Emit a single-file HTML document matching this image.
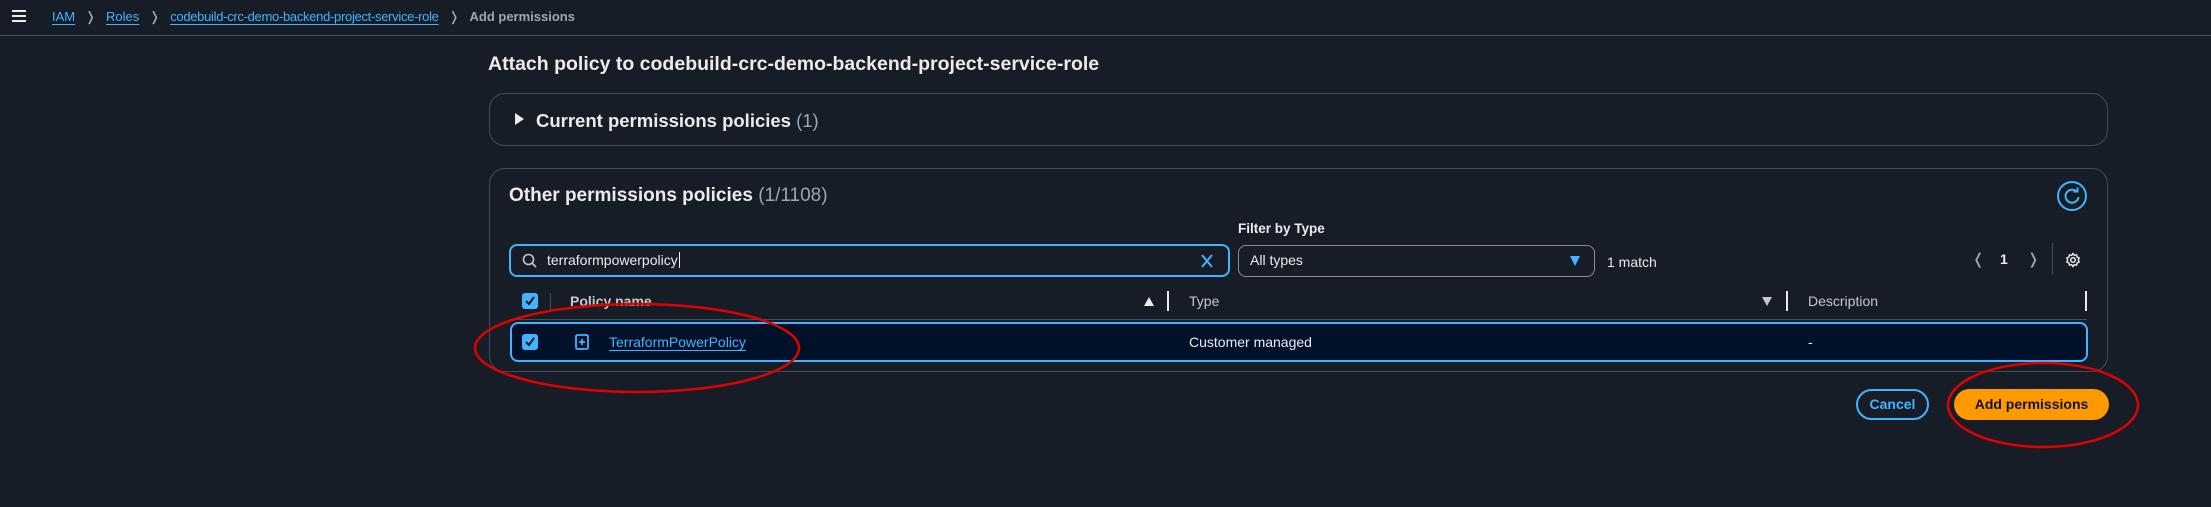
<!DOCTYPE html>
<html><head><meta charset="utf-8"><style>
*{box-sizing:border-box;margin:0;padding:0}
body{width:2211px;height:507px;background:#161d26;font-family:"Liberation Sans",sans-serif;color:#e9ebed;position:relative;overflow:hidden;font-size:14px}
.a{position:absolute;white-space:nowrap}
.lnk{color:#42b4ff;text-decoration:underline;text-underline-offset:3px}
.g{color:#9ba7b6}
.cb{position:absolute;width:16px;height:16px;background:#42b4ff;border-radius:3px}
.cb svg{position:absolute;left:2px;top:2px}
</style></head><body>
<div class="a" style="left:0;top:0;width:2211px;height:36px;border-bottom:1px solid #414d5c"></div>
<div class="a" style="left:12px;top:10px;width:14px;height:2px;background:#e9ebed;box-shadow:0 5px 0 #e9ebed,0 10px 0 #e9ebed"></div>
<div class="a" style="left:52px;top:9px;font-size:13px"><span class="lnk">IAM</span><span class="g" style="margin:0 10px">&#x276D;</span><span class="lnk">Roles</span><span class="g" style="margin:0 10px">&#x276D;</span><span class="lnk" style="letter-spacing:-0.3px">codebuild-crc-demo-backend-project-service-role</span><span class="g" style="margin:0 10px">&#x276D;</span><span class="g" style="font-weight:bold">Add permissions</span></div>

<div class="a" style="left:488px;top:53px;font-size:19.5px;font-weight:bold">Attach policy to codebuild-crc-demo-backend-project-service-role</div>

<div class="a" style="left:489px;top:93px;width:1619px;height:53px;border:1px solid #414d5c;border-radius:16px;background:#161d26"></div>
<div class="a" style="left:515px;top:113px;width:0;height:0;border-left:9px solid #e9ebed;border-top:6px solid transparent;border-bottom:6px solid transparent"></div>
<div class="a" style="left:536px;top:110px;font-size:18.5px;font-weight:bold">Current permissions policies <span class="g" style="font-weight:normal">(1)</span></div>

<div class="a" style="left:489px;top:168px;width:1619px;height:204px;border:1px solid #414d5c;border-radius:16px"></div>
<div class="a" style="left:509px;top:185px;font-size:19px;font-weight:bold">Other permissions policies <span class="g" style="font-weight:normal">(1/1108)</span></div>
<svg class="a" style="left:2056px;top:180px" width="32" height="32" viewBox="0 0 32 32"><circle cx="16" cy="16" r="14" fill="none" stroke="#42b4ff" stroke-width="2"/><path d="M21 12 A6.5 6.5 0 1 0 22.5 17" fill="none" stroke="#42b4ff" stroke-width="2"/><path d="M17.5 11.5 L21.5 11.5 L21.5 7.5" fill="none" stroke="#42b4ff" stroke-width="2"/></svg>

<div class="a" style="left:1238px;top:221px;font-size:13.5px;font-weight:bold">Filter by Type</div>
<div class="a" style="left:509px;top:244px;width:721px;height:33px;border:2px solid #42b4ff;border-radius:8px"></div>
<svg class="a" style="left:522px;top:253px" width="16" height="16" viewBox="0 0 16 16"><circle cx="6.5" cy="6.5" r="5" fill="none" stroke="#c6c6cd" stroke-width="1.6"/><path d="M10 10 L14 14" stroke="#c6c6cd" stroke-width="1.6"/></svg>
<div class="a" style="left:547px;top:252px;font-size:14px">terraformpowerpolicy<span style="border-left:1px solid #e9ebed;margin-left:1px"></span></div>
<svg class="a" style="left:1200px;top:253px" width="14" height="16" viewBox="0 0 14 16"><path d="M2 2 L12 14 M12 2 L2 14" stroke="#42b4ff" stroke-width="2"/></svg>
<div class="a" style="left:1238px;top:245px;width:357px;height:32px;border:1px solid #8c8c94;border-radius:8px"></div>
<div class="a" style="left:1250px;top:252px;font-size:14px">All types</div>
<div class="a" style="left:1570px;top:256px;width:0;height:0;border-top:10px solid #42b4ff;border-left:5px solid transparent;border-right:5px solid transparent"></div>
<div class="a" style="left:1607px;top:254px;font-size:14px">1 match</div>
<div class="a g" style="left:1972px;top:250px;font-size:15px">&#x276C;</div>
<div class="a" style="left:2000px;top:251px;font-size:14px;font-weight:bold">1</div>
<div class="a g" style="left:2027px;top:250px;font-size:15px">&#x276D;</div>
<div class="a" style="left:2052px;top:243px;width:1px;height:32px;background:#414d5c"></div>
<svg class="a" style="left:2065px;top:252px" width="16" height="16" viewBox="0 0 16 16"><circle cx="8" cy="8" r="2.3" fill="none" stroke="#e9ebed" stroke-width="1.5"/><path d="M8 1.5 L9.3 3.3 L11.6 2.8 L12 5 L14.2 6 L13.2 8 L14.2 10 L12 11 L11.6 13.2 L9.3 12.7 L8 14.5 L6.7 12.7 L4.4 13.2 L4 11 L1.8 10 L2.8 8 L1.8 6 L4 5 L4.4 2.8 L6.7 3.3 Z" fill="none" stroke="#e9ebed" stroke-width="1.4"/></svg>

<div class="cb" style="left:522px;top:293px"><svg width="12" height="12" viewBox="0 0 12 12"><path d="M2 6 L5 9 L10 2" fill="none" stroke="#0f141a" stroke-width="2"/></svg></div>
<div class="a" style="left:550px;top:293px;width:1px;height:18px;background:#414d5c"></div>
<div class="a" style="left:570px;top:293px;font-size:14px;font-weight:bold;color:#c6c6cd">Policy name</div>
<div class="a" style="left:1144px;top:297px;width:0;height:0;border-bottom:9px solid #e9ebed;border-left:5px solid transparent;border-right:5px solid transparent"></div>
<div class="a" style="left:1167px;top:291px;width:2px;height:20px;background:#e9ebed"></div>
<div class="a" style="left:1189px;top:293px;font-size:14px;color:#c6c6cd">Type</div>
<div class="a" style="left:1762px;top:297px;width:0;height:0;border-top:9px solid #c6c6cd;border-left:5px solid transparent;border-right:5px solid transparent"></div>
<div class="a" style="left:1786px;top:291px;width:2px;height:20px;background:#e9ebed"></div>
<div class="a" style="left:1808px;top:293px;font-size:14px;color:#c6c6cd">Description</div>
<div class="a" style="left:2085px;top:291px;width:2px;height:20px;background:#e9ebed"></div>
<div class="a" style="left:510px;top:319px;width:1577px;height:1px;background:#414d5c"></div>

<div class="a" style="left:510px;top:322px;width:1578px;height:40px;background:#001129;border:2px solid #42b4ff;border-radius:8px"></div>
<div class="cb" style="left:522px;top:334px"><svg width="12" height="12" viewBox="0 0 12 12"><path d="M2 6 L5 9 L10 2" fill="none" stroke="#0f141a" stroke-width="2"/></svg></div>
<svg class="a" style="left:575px;top:334px" width="14" height="16" viewBox="0 0 14 16"><rect x="1" y="1" width="12" height="14" rx="1.5" fill="none" stroke="#42b4ff" stroke-width="1.8"/><path d="M7 5 V11 M4 8 H10" stroke="#42b4ff" stroke-width="1.8"/></svg>
<div class="a lnk" style="left:609px;top:334px;font-size:14px">TerraformPowerPolicy</div>
<div class="a" style="left:1189px;top:334px;font-size:14px">Customer managed</div>
<div class="a" style="left:1808px;top:334px;font-size:14px">-</div>

<div class="a" style="left:1856px;top:389px;width:73px;height:31px;border:2px solid #42b4ff;border-radius:16px;color:#42b4ff;font-weight:bold;font-size:14px;text-align:center;line-height:27px">Cancel</div>
<div class="a" style="left:1954px;top:389px;width:155px;height:31px;background:#ff9900;border-radius:16px;color:#0f141a;font-weight:bold;font-size:14px;text-align:center;line-height:31px">Add permissions</div>

<svg class="a" style="left:0;top:0" width="2211" height="507"><ellipse cx="637" cy="348" rx="162" ry="44" fill="none" stroke="#e00000" stroke-width="2.5"/><ellipse cx="2043" cy="405" rx="95" ry="42" fill="none" stroke="#e00000" stroke-width="2.5"/></svg>
</body></html>
